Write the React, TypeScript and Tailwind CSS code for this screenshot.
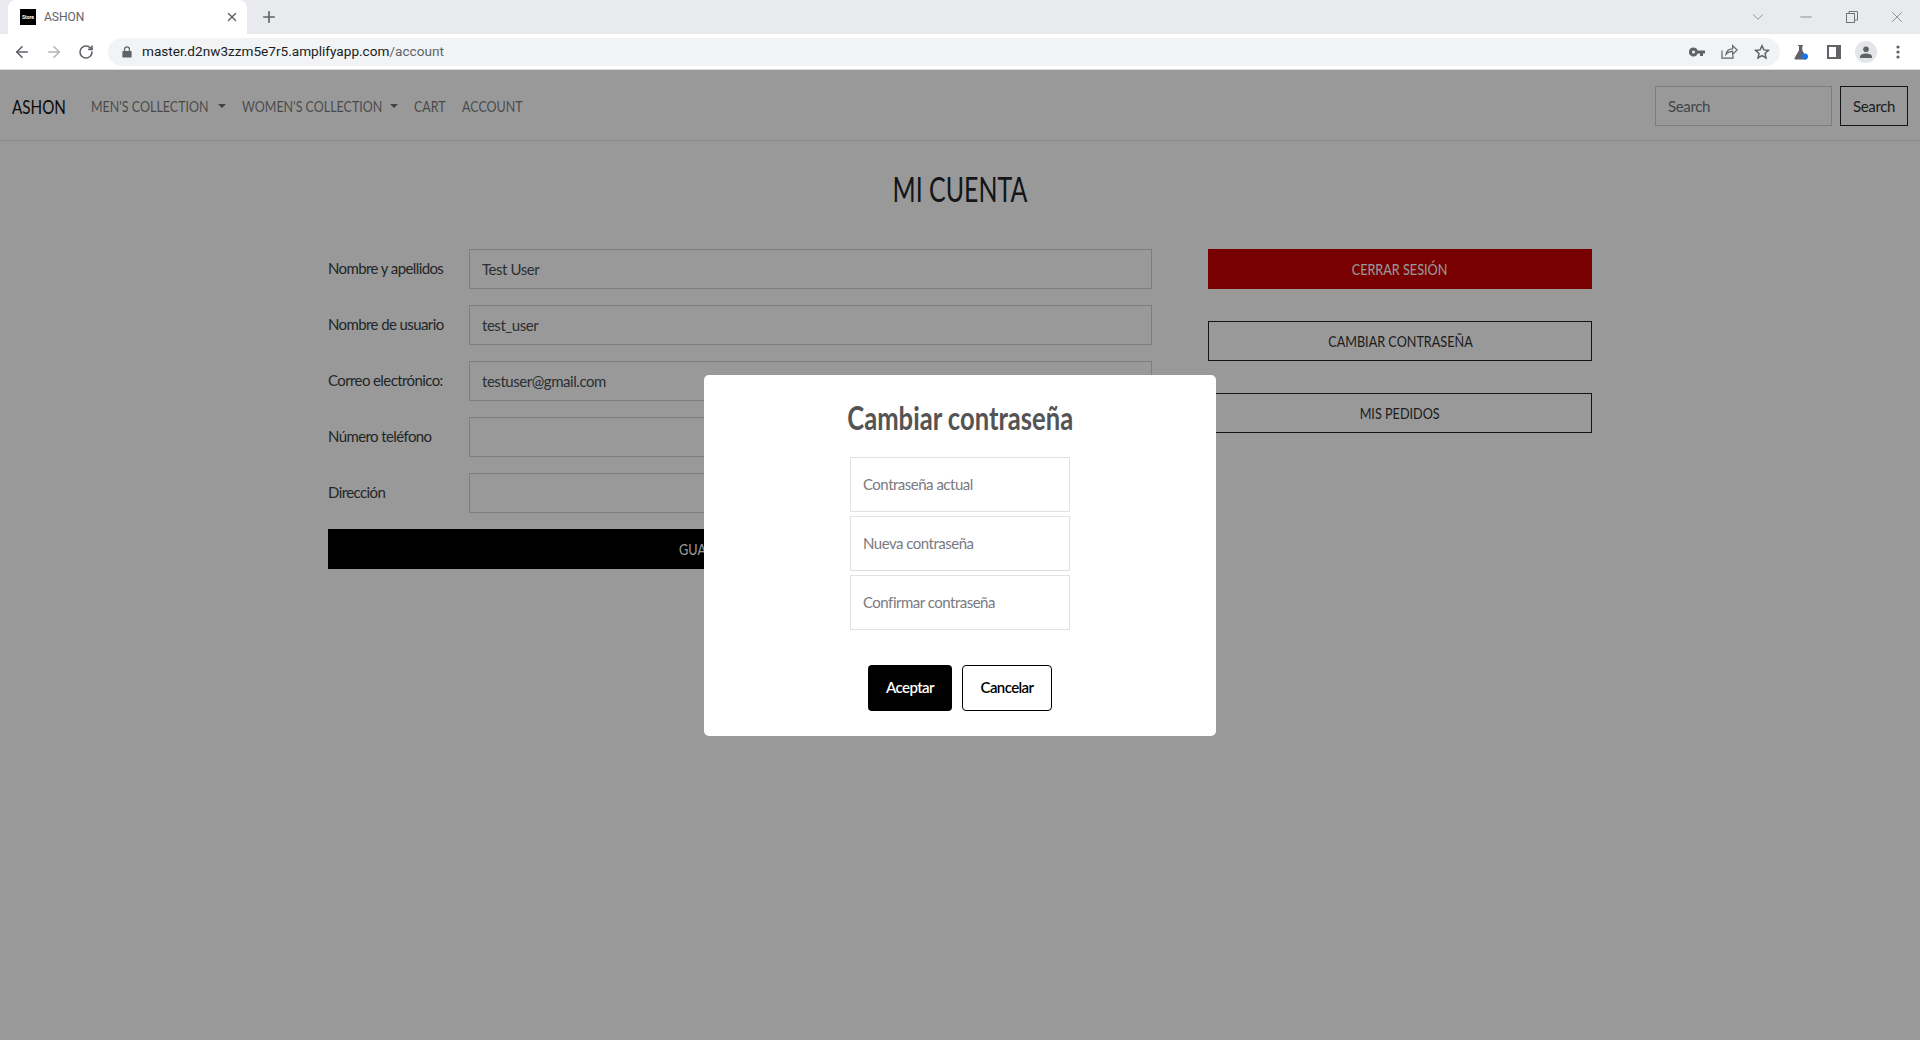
import React from "react";
import { ArrowLeft, ArrowRight, RotateCw, Plus, X, ChevronDown, Minus } from "lucide-react";

const F = "font-['Lato','Liberation_Sans',sans-serif]";

function Field({ label, value }: { label: string; value?: string }) {
  return (
    <div className="flex items-center h-10 mb-4">
      <label className="w-[141px] whitespace-nowrap text-[15px] tracking-[-0.6px] text-[#3a3f44] -mt-0.5">{label}</label>
      <input
        readOnly
        value={value ?? ""}
        className="flex-1 h-10 px-3 border border-[#ced4da] bg-white text-[15px] tracking-[-0.45px] text-[#495057] outline-none"
      />
    </div>
  );
}

function ModalInput({ placeholder }: { placeholder: string }) {
  return (
    <input
      readOnly
      placeholder={placeholder}
      className="block w-[220px] h-[55px] px-3 border border-[#e0e0e6] bg-white text-[15px] tracking-[-0.5px] placeholder:text-[#7a7a80] outline-none"
    />
  );
}

function Caret() {
  return <span className="ml-[9px] inline-block w-0 h-0 border-x-[4px] border-x-transparent border-t-[4px] border-t-[#6b6b6b]" />;
}

function NavLink({ children, caret, width }: { children: React.ReactNode; caret?: boolean; width: string }) {
  return (
    <a className="px-2 flex items-center text-[16px] text-black/55 whitespace-nowrap">
      <span className={width}>
        <span className="inline-block origin-left scale-x-[.78]">{children}</span>
      </span>
      {caret && <Caret />}
    </a>
  );
}

function CapsLabel({ children }: { children: React.ReactNode }) {
  return <span className="inline-block scale-x-[.79] whitespace-nowrap">{children}</span>;
}

function ChromeBars() {
  return (
    <div className="font-['Roboto','Liberation_Sans',sans-serif] shrink-0">
      <div className="h-[34px] bg-[#e8eaed] flex items-end pl-2">
        <div className="w-[239px] h-[34px] bg-white rounded-t-lg flex items-center pl-3 pr-2">
          <div className="w-4 h-4 bg-black flex items-center justify-center">
            <span className="text-[5px] leading-none text-white font-bold">Store</span>
          </div>
          <span className="ml-2 flex-1 text-xs text-[#5f6368]">ASHON</span>
          <X className="w-[14px] h-[14px] text-[#5f6368]" strokeWidth={2.4} />
        </div>
        <div className="ml-[13px] h-[34px] flex items-center">
          <Plus className="w-[18px] h-[18px] text-[#5f6368]" strokeWidth={2.2} />
        </div>
        <div className="flex-1" />
        <div className="h-[34px] flex items-center text-[#70757a]">
          <ChevronDown className="w-[18px] h-[18px] mr-[30px]" strokeWidth={1} />
          <Minus className="w-[18px] h-[18px] mr-[30px]" strokeWidth={1} />
          <svg width="14" height="14" viewBox="0 0 14 14" fill="none" stroke="currentColor" className="mr-[29px]">
            <rect x="1.500" y="3.500" width="8" height="9" />
            <path d="M4 3.500V1.500h8.500v8.500h-3" />
          </svg>
          <X className="w-[18px] h-[18px] mr-[14px]" strokeWidth={1} />
        </div>
      </div>
      <div className="h-[36px] bg-white flex items-center border-b border-[#dadce0]">
        <ArrowLeft className="ml-[13px] w-[18px] h-[18px] text-[#5f6368]" strokeWidth={2.2} />
        <ArrowRight className="ml-[14px] w-[18px] h-[18px] text-[#b4b6b9]" strokeWidth={2.2} />
        <RotateCw className="ml-[15px] w-[16px] h-[16px] text-[#5f6368]" strokeWidth={2.4} />
        <div className="ml-[14px] w-[1672px] h-[28px] rounded-full bg-[#f1f3f4] flex items-center pl-[14px] pr-[10px]">
          <svg width="10" height="12" viewBox="0 0 10 12" fill="#5f6368">
            <path d="M1 5h1V3.200a3 3 0 0 1 6 0V5h1a.6.6 0 0 1 .6.6v5.400a.6.6 0 0 1-.6.6H1a.6.6 0 0 1-.6-.6V5.600A.6.6 0 0 1 1 5zm2.200 0h3.600V3.200a1.800 1.800 0 0 0-3.600 0V5z" />
          </svg>
          <span className="ml-[10px] text-[13.6px] text-[#202124]">
            master.d2nw3zzm5e7r5.amplifyapp.com<span className="text-[#5f6368]">/account</span>
          </span>
          <div className="flex-1" />
          <svg width="16" height="10" viewBox="0 0 16 10" fill="#5f6368" className="mr-[16px]">
            <path d="M4.500 0.500a4.500 4.500 0 0 1 4.200 3H16v3h-2v2.500h-3V6.500H8.700a4.500 4.500 0 1 1-4.200-6zm0 3a1.500 1.500 0 1 0 0 3 1.500 1.500 0 0 0 0-3z" />
          </svg>
          <svg width="17" height="15" viewBox="0 0 17 15" fill="none" stroke="#5f6368" strokeWidth="1.2" className="mr-[16px]">
            <path d="M1 6.500v7.700h11v-3" />
            <path d="M5 10.500c.4-3.500 3-5.600 6.600-5.600V1.600L16.200 6l-4.600 4.400V7.400C8.800 7.400 6.600 8.400 5 10.500z" />
          </svg>
          <svg width="16" height="16" viewBox="0 0 16 16" fill="none" stroke="#5f6368" strokeWidth="1.500">
            <path d="M8 1.700l1.900 4.200 4.500.5-3.400 3 1 4.500L8 11.600 4 13.900l1-4.500-3.400-3 4.500-.5z" />
          </svg>
        </div>
        <svg width="14" height="16" viewBox="0 0 14 16" className="ml-[14px]">
          <path d="M4 1h5v1H8.300v4.300L12.600 14a1 1 0 0 1-.9 1.500H1.500A1 1 0 0 1 .6 14L5 6.300V2H4z" fill="#5f6368" />
          <circle cx="11" cy="12.500" r="3" fill="#1a73e8" />
        </svg>
        <svg width="14" height="14" viewBox="0 0 14 14" className="ml-[19px]">
          <path d="M0 0h14v14H0zM2 2v10h7V2z" fill="#5f6368" fillRule="evenodd" />
          <rect x="9" y="2" width="3" height="10" fill="#5f6368" />
        </svg>
        <div className="ml-[14px] w-[22px] h-[22px] rounded-full bg-[#e3e5e9] flex items-center justify-center">
          <svg width="12" height="12" viewBox="0 0 12 12" fill="#5f6368">
            <circle cx="6" cy="3.200" r="2.800" />
            <path d="M0 12v-1.500C0 8.500 3 7.400 6 7.400s6 1.100 6 3.100V12z" />
          </svg>
        </div>
        <svg width="4" height="14" viewBox="0 0 4 14" fill="#5f6368" className="ml-[19px]">
          <circle cx="2" cy="2" r="1.600" />
          <circle cx="2" cy="7" r="1.600" />
          <circle cx="2" cy="12" r="1.600" />
        </svg>
      </div>
    </div>
  );
}

export default function App() {
  return (
    <div className={`h-[1040px] w-[1920px] overflow-hidden flex flex-col bg-white ${F}`}>
      <ChromeBars />
      <div className="relative flex-1">
        <nav className="h-[71px] pt-[2px] flex items-center border-b border-[#dee2e6] pl-3 pr-3">
          <span className="w-[54px] mr-[17px] text-[20px] text-[#111] whitespace-nowrap">
            <span className="inline-block origin-left scale-x-[.76]">ASHON</span>
          </span>
          <NavLink caret width="w-[118px]">MEN'S COLLECTION</NavLink>
          <NavLink caret width="w-[139px]">WOMEN'S COLLECTION</NavLink>
          <NavLink width="w-[32px]">CART</NavLink>
          <NavLink width="w-[59px]">ACCOUNT</NavLink>
          <div className="flex-1" />
          <input
            readOnly
            placeholder="Search"
            className="w-[177px] h-10 px-3 border border-[#ced4da] text-[15px] tracking-[-0.35px] placeholder:text-[#6c757d] outline-none"
          />
          <button className="ml-2 w-[68px] h-10 border border-[#222] text-[15px] tracking-[-0.35px] text-[#333]">Search</button>
        </nav>

        <h1 className="mt-[28px] text-center text-[34px] leading-[40px] text-[#212529]">
          <span className="inline-block scale-x-[.733]">MI CUENTA</span>
        </h1>

        <div className="mt-[40px] w-[1264px] mx-auto flex justify-between">
          <div className="w-[824px]">
            <Field label="Nombre y apellidos" value="Test User" />
            <Field label="Nombre de usuario" value="test_user" />
            <Field label="Correo electrónico:" value="testuser@gmail.com" />
            <Field label="Número teléfono" />
            <Field label="Dirección" />
            <button className="w-full h-10 bg-black text-white text-[16px]"><CapsLabel>GUARDAR CAMBIOS</CapsLabel></button>
          </div>
          <div className="w-[384px] flex flex-col">
            <button className="h-10 bg-[#c80000] text-white text-[16px]"><CapsLabel>CERRAR SESIÓN</CapsLabel></button>
            <button className="mt-8 h-10 border border-[#222] text-[16px] text-[#333]"><CapsLabel>CAMBIAR CONTRASEÑA</CapsLabel></button>
            <button className="mt-8 h-10 border border-[#222] text-[16px] text-[#333]"><CapsLabel>MIS PEDIDOS</CapsLabel></button>
          </div>
        </div>

        <div className="absolute inset-0 bg-black/40 flex items-center justify-center">
          <div className="w-[512px] h-[361px] bg-white rounded-[5px] flex flex-col items-center pt-[24px]">
            <h2 className="text-[32px] leading-[38px] font-bold text-[#545454] whitespace-nowrap">
              <span className="inline-block scale-x-[.8]">Cambiar contraseña</span>
            </h2>
            <div className="mt-[20px] flex flex-col gap-1">
              <ModalInput placeholder="Contraseña actual" />
              <ModalInput placeholder="Nueva contraseña" />
              <ModalInput placeholder="Confirmar contraseña" />
            </div>
            <div className="mt-[35px] flex gap-[10px]">
              <button className="w-[84px] h-[46px] rounded bg-black text-white text-[15px] font-semibold tracking-[-0.6px]">Aceptar</button>
              <button className="w-[90px] h-[46px] rounded border border-black bg-white text-black text-[15px] font-semibold tracking-[-0.6px]">Cancelar</button>
            </div>
          </div>
        </div>
      </div>
    </div>
  );
}
